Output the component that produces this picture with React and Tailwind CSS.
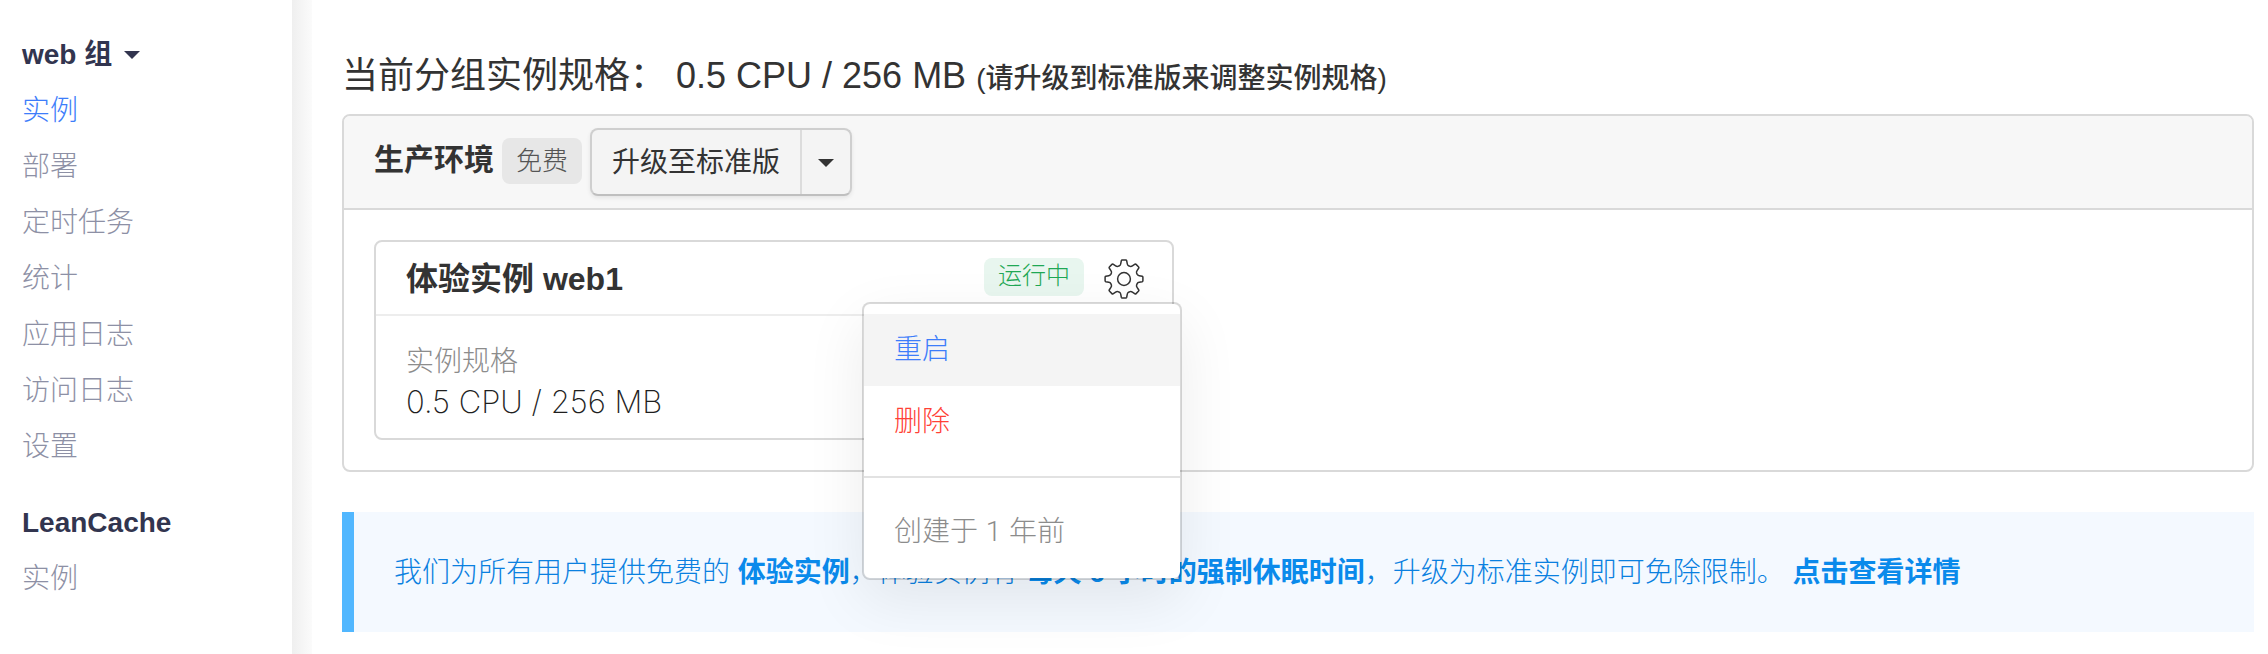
const sidebarGroups = [
  { title: 'web 组', caret: true, items: ['实例', '部署', '定时任务', '统计', '应用日志', '访问日志', '设置'], active: 0 },
  { title: 'LeanCache', caret: false, items: ['实例'], active: -1 },
];

// Outline of one tooth pointing up, relative to the hub.
const tooth = [
  [-4.6, -13.2], [-3.6, -13.7], [-3.3, -15.2],
  [-2.7, -18.2], [-2.5, -18.9], [-1.8, -18.9],
  [1.8, -18.9], [2.5, -18.9], [2.7, -18.2],
  [3.3, -15.2], [3.6, -13.7], [4.6, -13.2],
];

function buildGear() {
  let d = '';
  for (let i = 0; i < 8; i += 1) {
    const a = (i * Math.PI) / 4;
    const p = tooth.map(([x, y]) => [
      (20 + x * Math.cos(a) - y * Math.sin(a)).toFixed(2),
      (20 + x * Math.sin(a) + y * Math.cos(a)).toFixed(2),
    ].join(' '));
    d += `${i === 0 ? 'M' : 'L'}${p[0]}Q${p[1]} ${p[2]}L${p[3]}Q${p[4]} ${p[5]}`;
    d += `L${p[6]}Q${p[7]} ${p[8]}L${p[9]}Q${p[10]} ${p[11]}`;
  }
  return `${d}Z`;
}

const gearPath = buildGear();

function GearIcon() {
  return (
    <svg viewBox="0 0 40 40" className="size-10" fill="none" stroke="#333333" strokeWidth="1.5" strokeLinejoin="round" aria-hidden="true">
      <path d={gearPath} />
      <circle cx="20" cy="20" r="6.4" />
    </svg>
  );
}

function Caret() {
  return (
    <svg viewBox="0 0 16 8" className="h-2 w-4" fill="currentColor" aria-hidden="true">
      <path d="M0 0H16L8 8Z" />
    </svg>
  );
}

function Sidebar() {
  return (
    <aside className="flex shrink-0">
      <nav className="w-[292px] px-[22px] pt-[27px] text-[28px] leading-[56px]">
        {sidebarGroups.map((group) => (
          <section key={group.title} className="mb-5">
            <h2 className="font-bold text-[#32354f]">
              {group.caret ? (
                <button type="button" className="flex items-center gap-3">
                  {group.title}
                  <Caret />
                </button>
              ) : (
                group.title
              )}
            </h2>
            <ul>
              {group.items.map((item, i) => (
                <li key={item}>
                  <a href="#" className={i === group.active ? 'font-light text-[#3d7dfa]' : 'font-light text-[#8d90a5]'}>
                    {item}
                  </a>
                </li>
              ))}
            </ul>
          </section>
        ))}
      </nav>
      <div className="w-5 bg-linear-to-r from-[#efefef] to-[#fbfbfb]" />
    </aside>
  );
}

function InstanceMenu() {
  return (
    <div role="menu" className="absolute top-full right-[-38px] z-10 mt-[3px] w-[320px] rounded-lg border-2 border-black/15 bg-white bg-clip-padding py-2.5 text-[28px] leading-[72px] font-light shadow-[0_20px_60px_rgba(0,0,0,0.08)]">
      <button type="button" role="menuitem" className="block w-full bg-[#f4f4f4] px-[30px] text-left text-[#3d7dfa]">重启</button>
      <button type="button" role="menuitem" className="block w-full px-[30px] text-left text-[#ff4136]">删除</button>
      <hr className="my-[18px] border-t-2 border-[#e2e2e2]" />
      <p className="px-[30px] text-[#8c8c8c]">
        创建于 <span className="font-[Roboto]">1</span> 年前
      </p>
    </div>
  );
}

function InstanceCard() {
  return (
    <article className="w-full max-w-[800px] rounded-lg border-2 border-[#d9d9d9]">
      <header className="flex h-[74px] items-center border-b-2 border-[#ededed] pt-0.5 pr-7 pl-[30px]">
        <h3 className="grow text-[32px] leading-10 font-bold">体验实例 web1</h3>
        <span className="mr-5 mb-1 rounded-lg bg-[#e8f6ef] px-3.5 pb-0.5 text-[24px] leading-9 font-light text-[#1fa855]">运行中</span>
        <div className="relative">
          <button type="button" aria-label="设置" className="block">
            <GearIcon />
          </button>
          <InstanceMenu />
        </div>
      </header>
      <dl className="px-[30px] pt-[26px] pb-4 font-light">
        <dt className="text-[28px] leading-10 text-[#8c8c8c]">实例规格</dt>
        <dd className="font-[Inter] text-[31px] leading-10 font-extralight text-[#1f1f1f]">0.5 CPU / 256 MB</dd>
      </dl>
    </article>
  );
}

export default function App() {
  return (
    <div className="flex min-h-screen bg-white font-['Liberation_Sans','Noto_Sans_CJK_SC',sans-serif] text-[#333333]">
      <Sidebar />
      <main className="min-w-0 grow pt-[52px] pr-3.5 pl-[30px]">
        <h1 className="mb-3.5 h-12 text-[36px] leading-[48px]">
          当前分组实例规格： 0.5 CPU / 256 MB{' '}
          <small className="text-[28px] font-medium">(请升级到标准版来调整实例规格)</small>
        </h1>

        <section className="rounded-lg border-2 border-[#d9d9d9]">
          <header className="flex h-[94px] items-center rounded-t-md border-b-2 border-[#d9d9d9] bg-[#f7f7f7] px-[30px]">
            <h2 className="mr-2 pb-1 text-[30px] leading-10 font-bold">生产环境</h2>
            <span className="mr-2 mb-0.5 rounded-lg bg-[#e7e7e7] px-3.5 text-[26px] leading-[46px] font-light text-[#555555]">免费</span>
            <div className="flex h-[68px] rounded-lg border-2 border-[#cfcfcf] border-b-[#bfbfbf] bg-[#f4f4f4] shadow-[0_2px_4px_rgba(0,0,0,0.08)]">
              <button type="button" className="px-5 pt-0.5 text-[28px]">升级至标准版</button>
              <button type="button" aria-label="更多" className="flex w-[50px] items-center justify-center border-l-2 border-[#dcdcdc] pt-0.5">
                <Caret />
              </button>
            </div>
          </header>
          <div className="p-[30px]">
            <InstanceCard />
          </div>
        </section>

        <p className="mt-10 border-l-[12px] border-[#51b7ff] bg-[#f4f9ff] px-10 pt-[41px] pb-[39px] text-[28px] leading-10 font-light text-[#0a80e0]">
          我们为所有用户提供免费的 <strong className="font-bold text-[#0a8aeb]">体验实例</strong>，体验实例有{' '}
          <strong className="font-bold text-[#0a8aeb]">每天 6 小时的强制休眠时间</strong>，升级为标准实例即可免除限制。{' '}
          <a href="#" className="font-bold text-[#0a8aeb]">点击查看详情</a>
        </p>
      </main>
    </div>
  );
}
